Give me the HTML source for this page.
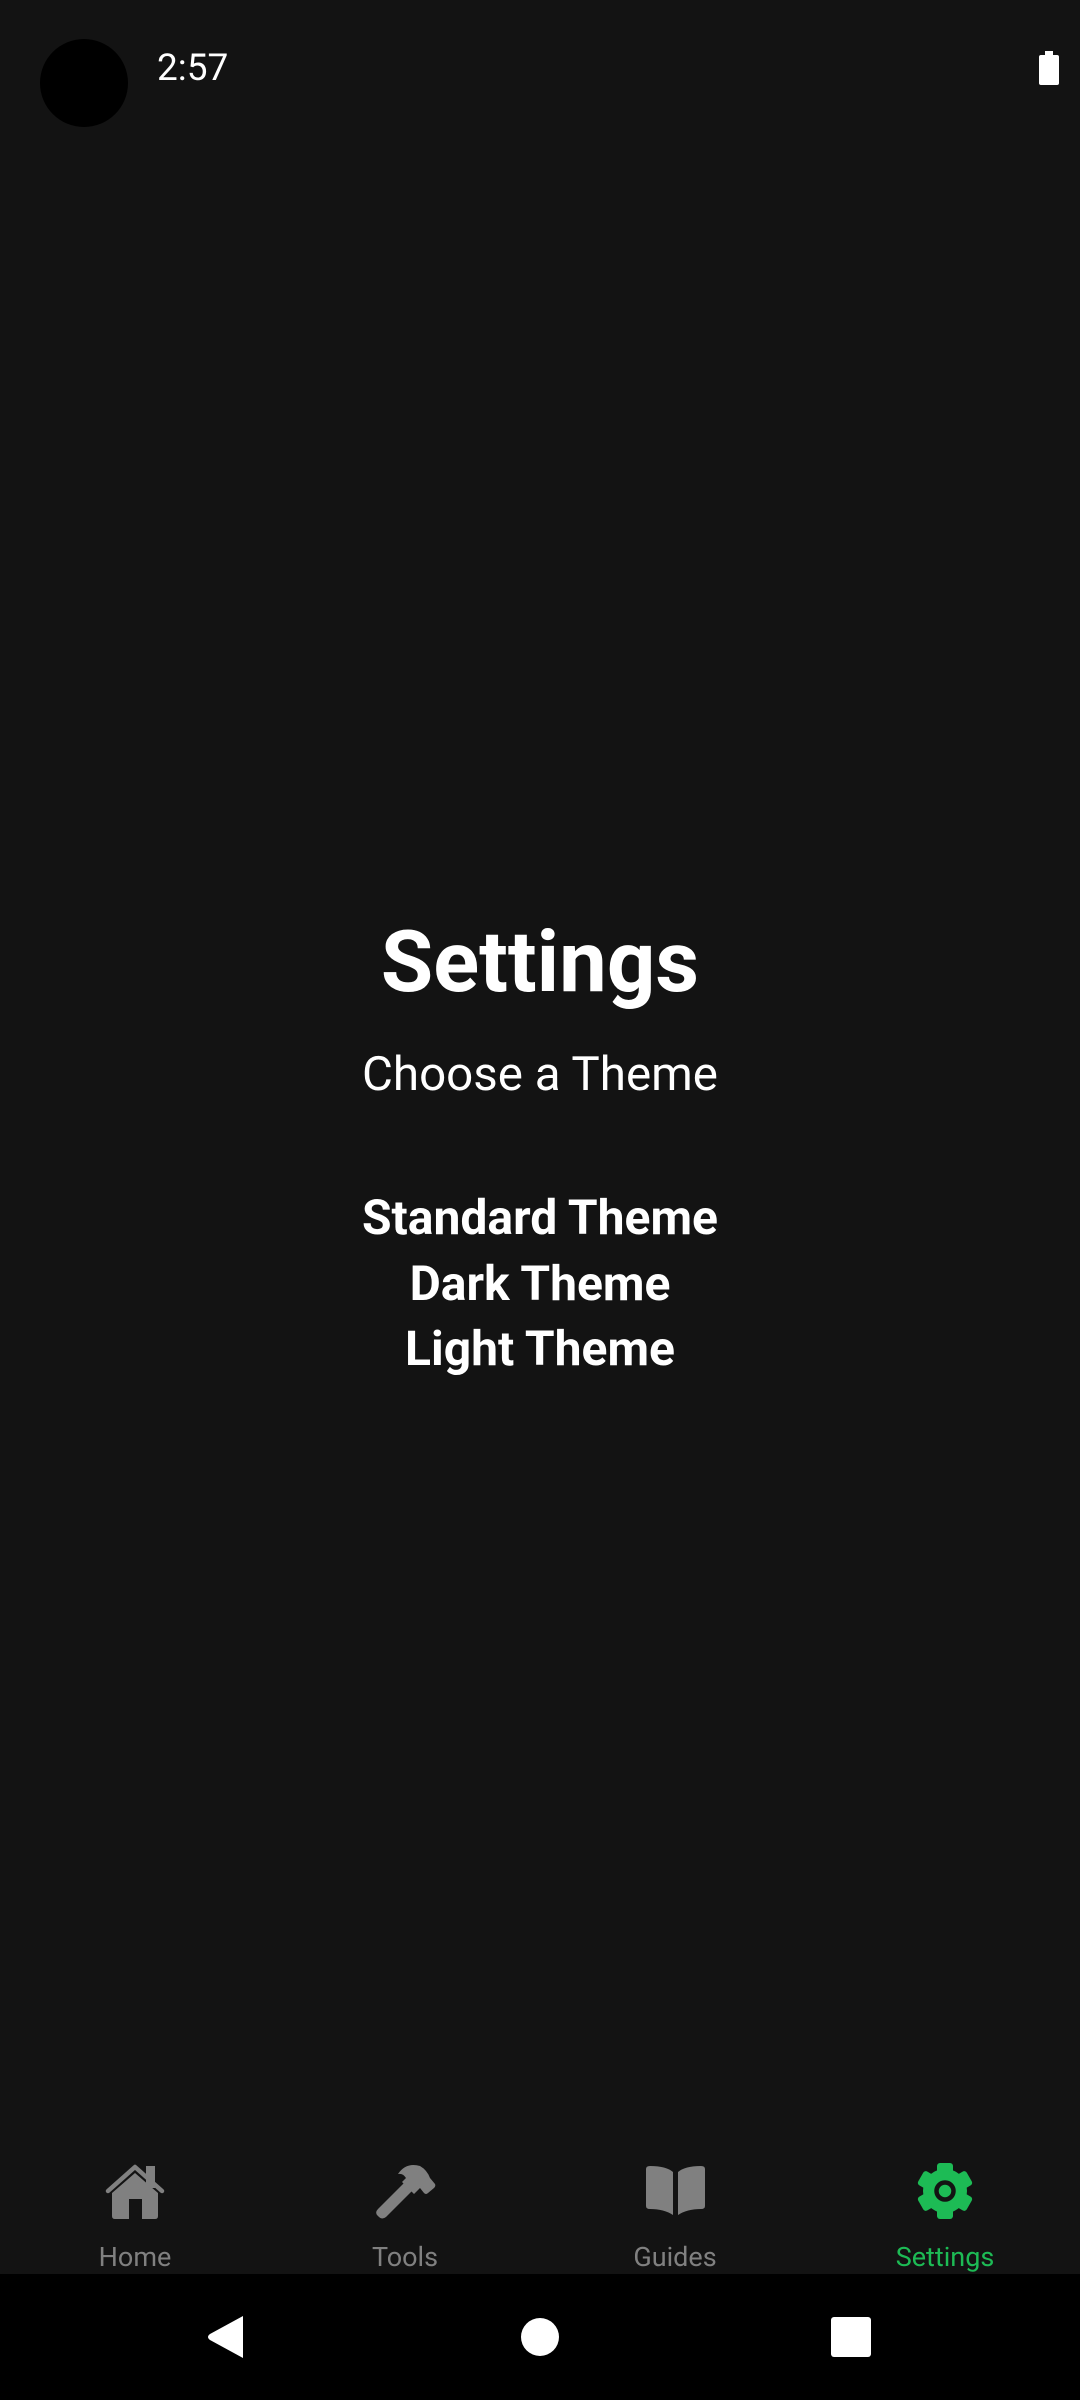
<!DOCTYPE html>
<html><head><meta charset="utf-8"><style>
html,body{margin:0;padding:0;width:1080px;height:2400px;background:#131313;overflow:hidden;font-family:"Roboto","Liberation Sans",sans-serif;}
.a{position:absolute;white-space:nowrap;color:#fff;}
.c{left:0;width:1080px;text-align:center;}
.lbl{position:absolute;font-size:27px;color:#808080;text-align:center;width:200px;top:2240px;line-height:34px;}
</style></head><body>
<div class="a" style="left:40px;top:39px;width:88px;height:88px;border-radius:50%;background:#000;"></div>
<div class="a" style="left:157px;top:47px;font-size:37px;line-height:44px;">2:57</div>
<div class="a" style="left:1039px;top:55px;width:20px;height:30px;background:#fff;border-radius:2px;"></div>
<div class="a" style="left:1045px;top:51px;width:8px;height:5px;background:#fff;"></div>

<div class="a c" style="top:912px;font-size:85px;font-weight:bold;line-height:100px;">Settings</div>
<div class="a c" style="top:1046px;font-size:47.5px;line-height:56px;">Choose a Theme</div>
<div class="a c" style="top:1190px;font-size:48px;font-weight:bold;line-height:56px;">Standard Theme</div>
<div class="a c" style="top:1256px;font-size:48px;font-weight:bold;line-height:56px;">Dark Theme</div>
<div class="a c" style="top:1321px;font-size:48px;font-weight:bold;line-height:56px;">Light Theme</div>

<svg class="a" style="left:0;top:0" width="1080" height="2400">
<!-- home -->
<rect x="146" y="2166" width="9" height="22" fill="#808080"/>
<polyline points="108,2191 135,2167 162,2191" fill="none" stroke="#808080" stroke-width="4.5" stroke-linecap="round" stroke-linejoin="round"/>
<path d="M112 2193 L135 2173 L158 2193 L158 2216 Q158 2219 155 2219 L142 2219 L142 2199 L129 2199 L129 2219 L115 2219 Q112 2219 112 2216 Z" fill="#808080"/>
<!-- hammer -->
<g fill="#808080">
<path d="M378 2209 L404 2183 L412 2191 L386 2217 Q382 2220 379 2217 L377 2215 Q375 2212 378 2209 Z"/>
<path d="M398 2174 Q406 2162 420 2166 Q427 2170 430 2178 L435 2184 Q436 2186 434 2188 L428 2193 Q426 2195 424 2193 L420 2188 L414 2194 L402 2182 L406 2178 Q403 2173 398 2174 Z"/>
</g>
<!-- book -->
<g fill="#808080">
<path d="M646 2169 Q646 2166 650 2166 Q666 2166 673 2172 L673 2215 Q664 2209 650 2209 Q646 2209 646 2206 Z"/>
<path d="M705 2169 Q705 2166 701 2166 Q685 2166 678 2172 L678 2215 Q687 2209 701 2209 Q705 2209 705 2206 Z"/>
</g>
<!-- gear -->
<g transform="translate(945 2191)" fill="#1dbb55">
<circle r="22"/>
<rect x="-8" y="-28" width="16" height="14" rx="3"/>
<rect x="-8" y="-28" width="16" height="14" rx="3" transform="rotate(60)"/>
<rect x="-8" y="-28" width="16" height="14" rx="3" transform="rotate(120)"/>
<rect x="-8" y="-28" width="16" height="14" rx="3" transform="rotate(180)"/>
<rect x="-8" y="-28" width="16" height="14" rx="3" transform="rotate(240)"/>
<rect x="-8" y="-28" width="16" height="14" rx="3" transform="rotate(300)"/>
<circle r="8.5" fill="none" stroke="#131313" stroke-width="4.5"/>
</g>
</svg>

<div class="lbl" style="left:35px;">Home</div>
<div class="lbl" style="left:305px;">Tools</div>
<div class="lbl" style="left:575px;">Guides</div>
<div class="lbl" style="left:845px;color:#1dbb55;">Settings</div>

<div class="a" style="left:0;top:2274px;width:1080px;height:126px;background:#000;"></div>
<svg class="a" style="left:0;top:0" width="1080" height="2400">
<path d="M243 2316 L243 2358 L210 2340 Q206 2337 210 2334 Z" fill="#fff"/>
<circle cx="540" cy="2337" r="19" fill="#fff"/>
<rect x="831" y="2317" width="40" height="40" rx="3" fill="#fff"/>
</svg>
</body></html>
